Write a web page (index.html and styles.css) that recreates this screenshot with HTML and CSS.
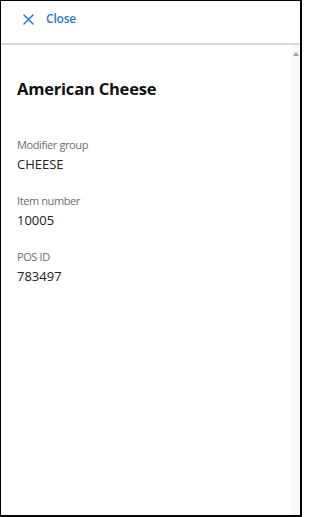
FILE: index.html
```html
<!DOCTYPE html>
<html>
<head>
<meta charset="utf-8">
<link rel="stylesheet" href="styles.css">
</head>
<body>
<div class="frame">
  <header class="header">
    <button class="close">
      <svg class="close-icon" width="11" height="11" viewBox="0 0 11 11"><path d="M1 1 L10 10 M10 1 L1 10" stroke="currentColor" stroke-width="1.5" fill="none" stroke-linecap="round"/></svg>
      <span>Close</span>
    </button>
  </header>
  <div class="body">
    <main class="content">
      <h1 class="title">American Cheese</h1>
      <div class="fields">
        <div class="field">
          <div class="label">Modifier group</div>
          <div class="value">CHEESE</div>
        </div>
        <div class="field">
          <div class="label">Item number</div>
          <div class="value">10005</div>
        </div>
        <div class="field">
          <div class="label">POS ID</div>
          <div class="value">783497</div>
        </div>
      </div>
    </main>
    <div class="scrollbar"><span class="arrow-up"></span></div>
  </div>
</div>
</body>
</html>
```
FILE: styles.css
```css
* { box-sizing: border-box; }
html, body { margin: 0; padding: 0; background: #fff; }
body { font-family: "Open Sans", "Noto Sans", sans-serif; }
.frame {
  width: 302px;
  height: 517px;
  border-style: solid;
  border-color: #000;
  border-width: 1px 2px 2px 1px;
  display: flex;
  flex-direction: column;
  background: #fff;
}
.header {
  height: 44px;
  border-bottom: 2px solid #d9d9d9;
  padding: 9px 0 0 22px;
  flex: none;
}
.close {
  display: flex;
  align-items: center;
  gap: 12px;
  background: none;
  border: 0;
  padding: 0;
  color: #2b78d2;
  font-family: inherit;
  font-size: 12px;
  font-weight: 600;
  letter-spacing: -0.2px;
  line-height: 18px;
  cursor: pointer;
}
.close-icon { display: block; margin-top: 1px; }
.body {
  flex: 1;
  display: flex;
  min-height: 0;
}
.content {
  flex: 1;
  padding: 32px 0 0 16px;
}
.title {
  margin: 0;
  font-size: 16.5px;
  font-weight: 700;
  letter-spacing: -0.2px;
  line-height: 24px;
  color: #111;
}
.fields {
  margin-top: 36px;
  display: flex;
  flex-direction: column;
  gap: 18px;
}
.label {
  font-size: 11px;
  letter-spacing: -0.4px;
  line-height: 16px;
  color: #6e6e6e;
}
.value {
  font-size: 13px;
  line-height: 22px;
  color: #222;
}
.scrollbar {
  width: 9px;
  flex: none;
  background: #f8f8f8;
  position: relative;
}
.arrow-up {
  position: absolute;
  top: 7px;
  left: 2px;
  width: 0;
  height: 0;
  border-left: 3px solid transparent;
  border-right: 3px solid transparent;
  border-bottom: 4px solid #a0a0a0;
}
```
